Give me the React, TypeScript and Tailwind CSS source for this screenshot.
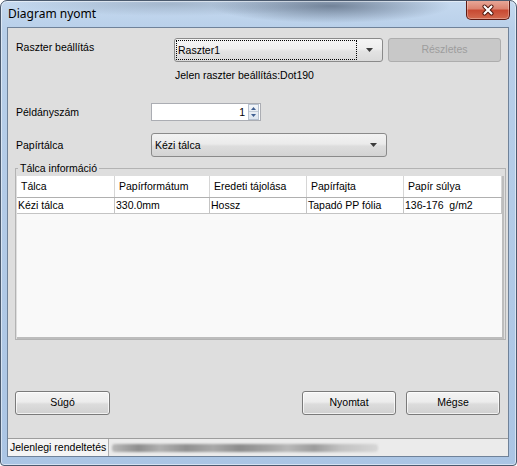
import React from "react";

function Arrow() {
  return (
    <svg width="7" height="4" viewBox="0 0 7 4">
      <path d="M0 0H7L3.5 4Z" fill="#3c3c3c" />
    </svg>
  );
}

function Btn({ children, className = "" }: { children: React.ReactNode; className?: string }) {
  return (
    <div
      className={`h-[24px] flex items-center justify-center rounded-[3px] border border-[#7a7a7a] bg-[linear-gradient(180deg,#f4f4f4_0%,#ececec_45%,#dcdcdc_55%,#d0d0d0_100%)] shadow-[inset_0_0_0_1px_rgba(255,255,255,0.7)] text-black ${className}`}
    >
      {children}
    </div>
  );
}

const headers = ["Tálca", "Papírformátum", "Eredeti tájolása", "Papírfajta", "Papír súlya"];
const row = ["Kézi tálca", "330.0mm", "Hossz", "Tapadó PP fólia", "136-176  g/m2"];

export default function App() {
  return (
    <div className="w-[517px] h-[466px] flex flex-col rounded-t-[7px] rounded-b-[4px] border border-[#4b5a6e] overflow-hidden bg-[radial-gradient(ellipse_120px_17px_at_330px_5px,rgba(60,74,95,0.6),rgba(60,74,95,0)),radial-gradient(ellipse_160px_12px_at_170px_3px,rgba(90,105,125,0.3),rgba(90,105,125,0)),linear-gradient(180deg,#c5d9ef_0px,#b8cfe9_30px,#abc5e4_100%)] shadow-[inset_0_0_0_1px_rgba(255,255,255,0.5)]">
      {/* title bar */}
      <div className="h-[26px] shrink-0 flex items-start">
        <span className="ml-[7px] mt-[5px] text-[12px] leading-[16px] text-black font-['Noto_Sans',sans-serif]">
          Diagram nyomt
        </span>
        <div className="ml-auto mr-[6px] mt-[-1px] w-[44px] h-[20px] rounded-b-[5px] border border-t-0 border-[#5e1a12] bg-[linear-gradient(180deg,#e9ab9c_0%,#dc8471_45%,#c84a33_55%,#d36a4f_100%)] shadow-[inset_0_0_0_1px_rgba(255,255,255,0.3)] flex items-center justify-center">
          <svg width="14" height="12" viewBox="0 0 14 12">
            <path d="M3.5 2.5L10.5 9.5M10.5 2.5L3.5 9.5" stroke="#4a1209" strokeWidth="4" strokeLinecap="round" />
            <path d="M3.5 2.5L10.5 9.5M10.5 2.5L3.5 9.5" stroke="#ffffff" strokeWidth="2.2" strokeLinecap="round" />
          </svg>
        </div>
      </div>

      {/* client */}
      <div className="flex-1 ml-[6px] mr-[7px] border border-[#6f8299] bg-[#dedede] flex flex-col text-[10.5px] text-black font-['Liberation_Sans',Arial,sans-serif]">
        {/* row 1 */}
        <div className="mt-[10px] h-[24px] flex items-start">
          <div className="w-[166px] pl-[8px] pt-[3px] leading-[13px]">Raszter beállítás</div>
          <div className="w-[209px] h-[24px] rounded-[3px] border border-[#8a8a8a] bg-[linear-gradient(180deg,#f5f5f5_0%,#eeeeee_45%,#e3e3e3_55%,#dadada_100%)] flex items-center">
            <div className="ml-[1px] w-[181px] h-[20px] border border-dotted border-black flex items-center pl-[1px] leading-[13px]">
              Raszter1
            </div>
            <div className="flex-1 flex justify-center">
              <Arrow />
            </div>
          </div>
          <div className="ml-[5px] w-[113px] h-[24px] rounded-[3px] border border-[#adadad] bg-[#c8c8c8] text-[#9d9d9d] flex items-center justify-center">
            Részletes
          </div>
        </div>

        {/* current setting */}
        <div className="mt-[7px] pl-[167px] leading-[13px]">Jelen raszter beállítás:Dot190</div>

        {/* copies */}
        <div className="mt-[21px] h-[18px] flex items-center">
          <div className="w-[143px] pl-[8px] leading-[13px]">Példányszám</div>
          <div className="w-[110px] h-[18px] bg-white border border-[#abadb3] flex items-center">
            <div className="flex-1 text-right pr-[3px] leading-[13px]">1</div>
            <div className="w-[11px] h-[16px] mr-[1px] flex flex-col border border-[#b7c2d1] bg-[linear-gradient(180deg,#f3f6fa,#dde5ef)]">
              <div className="h-[7px] flex items-center justify-center border-b border-[#c3ccd8]">
                <svg width="5" height="3" viewBox="0 0 5 3">
                  <path d="M0 3H5L2.5 0Z" fill="#3f5f92" />
                </svg>
              </div>
              <div className="flex-1 flex items-center justify-center">
                <svg width="5" height="3" viewBox="0 0 5 3">
                  <path d="M0 0H5L2.5 3Z" fill="#3f5f92" />
                </svg>
              </div>
            </div>
          </div>
        </div>

        {/* tray */}
        <div className="mt-[12px] h-[24px] flex items-center">
          <div className="w-[143px] pl-[8px] leading-[13px]">Papírtálca</div>
          <div className="w-[236px] h-[24px] rounded-[3px] border border-[#8a8a8a] bg-[linear-gradient(180deg,#f2f2f2_0%,#ebebeb_45%,#dddddd_55%,#d3d3d3_100%)] flex items-center">
            <div className="flex-1 pl-[3px] leading-[13px]">Kézi tálca</div>
            <div className="w-[26px] flex justify-center">
              <Arrow />
            </div>
          </div>
        </div>

        {/* group */}
        <fieldset className="mt-[4px] ml-[7px] w-[491px] min-w-0 border border-[#b3b3b3] px-[1px] pt-[1px] pb-0">
          <legend className="ml-[1px] px-[2px] leading-[14px]">Tálca információ</legend>
          <div className="h-[163px] bg-[#f9f9f9] border-r-2 border-b-2 border-[#bdbdbd] flex flex-col">
            <div className="h-[22px] grid grid-cols-[98px_95px_97px_97px_98px] bg-white border-b border-[#b0b0b0]">
              {headers.map((h) => (
                <div key={h} className="border-r border-[#d6d6d6] pl-[4px] flex items-center leading-[13px]">
                  {h}
                </div>
              ))}
            </div>
            <div className="h-[16px] grid grid-cols-[98px_95px_97px_97px_98px] bg-white border-b border-[#c4c4c4]">
              {row.map((c) => (
                <div key={c} className="border-r border-[#c4c4c4] pl-[1px] flex items-center leading-[13px] whitespace-pre">
                  {c}
                </div>
              ))}
            </div>
          </div>
        </fieldset>

        {/* buttons */}
        <div className="mt-[51px] h-[24px] flex">
          <Btn className="ml-[7px] w-[95px]">Súgó</Btn>
          <Btn className="ml-auto w-[94px]">Nyomtat</Btn>
          <Btn className="ml-[10px] mr-[8px] w-[94px]">Mégse</Btn>
        </div>

        {/* status bar */}
        <div className="mt-auto h-[18px] border-t border-[#9d9d9d] bg-[#ebebeb] flex items-stretch">
          <div className="w-[101px] bg-[#f4f4f4] border-r border-[#b0b0b0] pl-[2px] flex items-center leading-[13px] whitespace-nowrap">
            Jelenlegi rendeltetés
          </div>
          <div className="ml-[3px] flex items-center">
            <div className="w-[266px] h-[8px] rounded-[3px] blur-[1px] bg-[linear-gradient(90deg,#b9b9b9_0%,#8e8e8e_10%,#b0b0b0_18%,#909090_28%,#a9a9a9_38%,#8c8c8c_48%,#a2a2a2_58%,#b8b8b8_66%,#9c9c9c_76%,#c2c2c2_86%,#d6d6d6_100%)]" />
          </div>
        </div>
      </div>

      {/* bottom frame */}
      <div className="h-[8px] shrink-0" />
    </div>
  );
}
